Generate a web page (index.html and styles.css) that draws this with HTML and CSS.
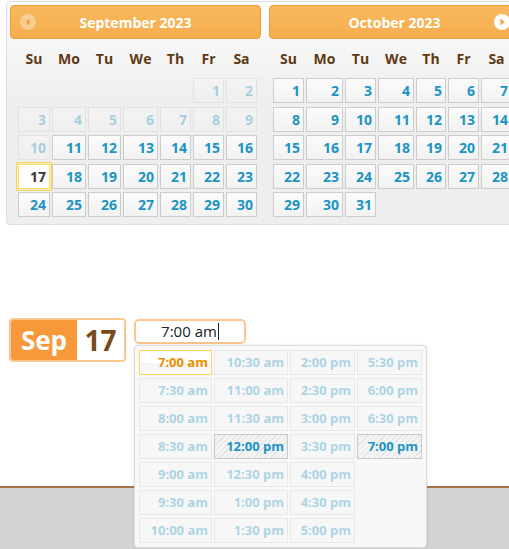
FILE: index.html
```html
<!DOCTYPE html>
<html lang="en">
  <head>
    <meta charset="UTF-8" />
    <meta name="viewport" content="width=device-width, initial-scale=1.0" />
    <title>Pick a date and time</title>
    <link rel="stylesheet" href="styles.css">
  </head>
  <body>
    <div class="datepicker">
      <div class="month month-sep">
        <div class="month-header">
          <span class="nav-btn nav-prev">
            <svg width="16" height="16" viewBox="0 0 16 16">
              <circle cx="8" cy="8" r="8" fill="#fff" fill-opacity="0.35" />
              <path d="M9.5 4.5 L5.5 8 L9.5 11.5 Z" fill="#f0a040" />
            </svg>
          </span>
          <span class="month-title">September 2023</span>
          <span></span>
        </div>
        <div class="days">
          <div class="dow">Su</div><div class="dow">Mo</div><div class="dow">Tu</div><div class="dow">We</div><div class="dow">Th</div><div class="dow">Fr</div><div class="dow">Sa</div>
        </div>
        <div class="days dates">
          <span></span><span></span><span></span><span></span><span></span>
          <a class="day off">1</a><a class="day off">2</a>
          <a class="day off">3</a><a class="day off">4</a><a class="day off">5</a><a class="day off">6</a><a class="day off">7</a><a class="day off">8</a><a class="day off">9</a>
          <a class="day off">10</a><a class="day">11</a><a class="day">12</a><a class="day">13</a><a class="day">14</a><a class="day">15</a><a class="day">16</a>
          <a class="day today">17</a><a class="day">18</a><a class="day">19</a><a class="day">20</a><a class="day">21</a><a class="day">22</a><a class="day">23</a>
          <a class="day">24</a><a class="day">25</a><a class="day">26</a><a class="day">27</a><a class="day">28</a><a class="day">29</a><a class="day">30</a>
        </div>
      </div>

      <div class="month month-oct">
        <div class="month-header">
          <span></span>
          <span class="month-title">October 2023</span>
          <span class="nav-btn nav-next">
            <svg width="16" height="16" viewBox="0 0 16 16">
              <circle cx="8" cy="8" r="8" fill="#fff" />
              <path d="M6.5 4.5 L10.5 8 L6.5 11.5 Z" fill="#f0a040" />
            </svg>
          </span>
        </div>
        <div class="days">
          <div class="dow">Su</div><div class="dow">Mo</div><div class="dow">Tu</div><div class="dow">We</div><div class="dow">Th</div><div class="dow">Fr</div><div class="dow">Sa</div>
        </div>
        <div class="days dates">
          <a class="day">1</a><a class="day">2</a><a class="day">3</a><a class="day">4</a><a class="day">5</a><a class="day">6</a><a class="day">7</a>
          <a class="day">8</a><a class="day">9</a><a class="day">10</a><a class="day">11</a><a class="day">12</a><a class="day">13</a><a class="day">14</a>
          <a class="day">15</a><a class="day">16</a><a class="day">17</a><a class="day">18</a><a class="day">19</a><a class="day">20</a><a class="day">21</a>
          <a class="day">22</a><a class="day">23</a><a class="day">24</a><a class="day">25</a><a class="day">26</a><a class="day">27</a><a class="day">28</a>
          <a class="day">29</a><a class="day">30</a><a class="day">31</a>
        </div>
      </div>
    </div>

    <div class="picker-row">
      <div class="date-badge">
        <span class="badge-month">Sep</span>
        <span class="badge-day">17</span>
      </div>

      <div class="time-field">
        <div class="time-input">7:00 am<span class="caret"></span></div>

        <div class="time-list">
          <a class="slot active">7:00 am</a>
          <a class="slot off">10:30 am</a>
          <a class="slot off">2:00 pm</a>
          <a class="slot off">5:30 pm</a>

          <a class="slot off">7:30 am</a>
          <a class="slot off">11:00 am</a>
          <a class="slot off">2:30 pm</a>
          <a class="slot off">6:00 pm</a>

          <a class="slot off">8:00 am</a>
          <a class="slot off">11:30 am</a>
          <a class="slot off">3:00 pm</a>
          <a class="slot off">6:30 pm</a>

          <a class="slot off">8:30 am</a>
          <a class="slot marked">12:00 pm</a>
          <a class="slot off">3:30 pm</a>
          <a class="slot marked">7:00 pm</a>

          <a class="slot off">9:00 am</a>
          <a class="slot off">12:30 pm</a>
          <a class="slot off">4:00 pm</a>
          <span></span>

          <a class="slot off">9:30 am</a>
          <a class="slot off">1:00 pm</a>
          <a class="slot off">4:30 pm</a>
          <span></span>

          <a class="slot off">10:00 am</a>
          <a class="slot off">1:30 pm</a>
          <a class="slot off">5:00 pm</a>
          <span></span>
        </div>
      </div>
    </div>

    <div class="footer"></div>
  </body>
</html>
```

FILE: styles.css
```css
html,
body {
  overflow: hidden;
}

body {
  margin: 0;
  font-family: "Open Sans", "Noto Sans", sans-serif;
  background: #fff;
  color: #333;
}

/* two-month calendar */

.datepicker {
  display: flex;
  width: 530px;
  margin: 1px 0 0 6px;
  padding: 3px 3px 7px 3px;
  border: 1px solid #ddd;
  border-radius: 4px;
  background: linear-gradient(#fdfdfd 0, #efefef 90px, #eeeeee 100%);
}

.month {
  width: 259px;
  flex: none;
}

.month-header {
  display: grid;
  grid-template-columns: 34px 1fr 34px;
  align-items: center;
  height: 32px;
  margin-right: 8px;
  border: 1px solid #eb9c3c;
  border-radius: 4px;
  background: linear-gradient(#f8b95e, #f5ad4c);
  color: #fff;
}

.month-title {
  text-align: center;
  font-size: 14px;
  font-weight: bold;
}

.nav-btn {
  display: flex;
  justify-content: center;
  align-items: center;
}

.days {
  display: grid;
  column-gap: 2px;
}

.month-sep .days {
  grid-template-columns: 32px 34px 33px 35px 31px 31px 31px;
  margin-left: 8px;
}

.month-oct .days {
  grid-template-columns: 31px 37px 31px 36px 30px 31px 31px;
  margin-left: 4px;
}

.dow {
  height: 20px;
  margin: 10px 0 9px;
  line-height: 20px;
  text-align: center;
  font-size: 14px;
  font-weight: bold;
  color: #5e3913;
}

.dates {
  grid-auto-rows: 25px;
  row-gap: 3.5px;
}

.day {
  display: block;
  padding-right: 3px;
  border: 1px solid #ccc;
  background: linear-gradient(#fbfbfb, #f2f2f2);
  text-align: right;
  font-size: 14px;
  font-weight: bold;
  line-height: 23px;
  color: #1c94c4;
}

.day.off {
  opacity: 0.35;
}

.day.today {
  background: #fff;
  border-color: #fcdc6c;
  box-shadow: 0 0 0 1px #fdf0bc, 0 0 0 2px #f8d458;
  color: #363636;
}

/* date + time row */

.picker-row {
  display: flex;
  gap: 8px;
  margin: 93px 0 0 9px;
}

.date-badge {
  display: flex;
  height: 40px;
  border: 2px solid #fac791;
  border-radius: 4px;
  overflow: hidden;
}

.badge-month {
  width: 66px;
  background: #f7993b;
  color: #fff;
  text-align: center;
  font-size: 26px;
  font-weight: bold;
  line-height: 40px;
}

.badge-day {
  width: 47px;
  background: #fff;
  color: #7a4a1b;
  text-align: center;
  font-size: 28px;
  font-weight: bold;
  line-height: 40px;
}

.time-field {
  position: relative;
  margin-top: 1px;
}

.time-input {
  width: 108px;
  height: 21px;
  border: 2px solid #fcc690;
  border-radius: 5px;
  text-align: center;
  font-size: 15px;
  line-height: 21px;
  color: #222;
}

.caret {
  display: inline-block;
  width: 1px;
  height: 17px;
  margin-left: 1px;
  vertical-align: -3px;
  background: #222;
}

/* time dropdown, drawn over the page */

.time-list {
  position: absolute;
  top: 26px;
  left: 0;
  display: grid;
  grid-template-columns: 73px 74px 65px 65px;
  grid-auto-rows: 25px;
  gap: 3px 2px;
  padding: 4px 4px 4px 4px;
  border: 1px solid #ddd;
  border-radius: 4px;
  background: #f8f8f8;
  box-shadow: 0 0 3px rgba(0, 0, 0, 0.12);
}

.slot {
  display: block;
  padding-right: 3px;
  border: 1px solid #ccc;
  background: #f6f6f6;
  text-align: right;
  font-size: 13px;
  font-weight: bold;
  line-height: 23px;
  color: #1c94c4;
}

.slot.off {
  opacity: 0.35;
}

.slot.active {
  border-color: #fbd850;
  background: linear-gradient(#fff 0, #fff 50%, #f4f4f4 50%, #fafafa 100%);
  color: #eb8f00;
}

.slot.marked {
  border-color: #c8c8c8;
  background: repeating-linear-gradient(135deg, #f4f4f4 0, #f4f4f4 3px, #e3e3e3 3px, #e3e3e3 4px);
}

.footer {
  height: 120px;
  margin-top: 124px;
  border-top: 2px solid #a57448;
  background: #d3d3d3;
}
```
